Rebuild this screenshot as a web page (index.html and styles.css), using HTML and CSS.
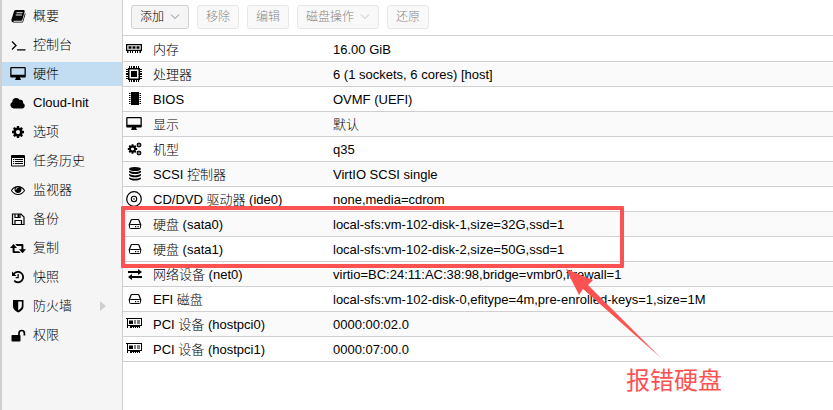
FILE: index.html
```html
<!DOCTYPE html>
<html lang="zh-CN">

<head>
    <meta charset="UTF-8">
    <meta name="viewport" content="width=device-width, initial-scale=1.0">
    <title>硬件</title>
    <link rel="stylesheet" href="styles.css">
</head>

<body>
    <!-- Shared icons -->
    <svg class="sprite" aria-hidden="true">
        <symbol id="desktop" viewBox="0 0 16 16">
            <path fill-rule="evenodd" d="M1.2 1h13.6q1 0 1 1v8.500q0 1-1 1H10q0 1 .8 1.500V14H5.200v-1Q6 12.500 6 11.500H1.200q-1 0-1-1V2q0-1 1-1zM1.500 2.200v6.600h13V2.200z" />
        </symbol>
        <symbol id="cog" viewBox="0 0 1792 1792">
            <path d="M1152 896q0-106-75-181t-181-75-181 75-75 181 75 181 181 75 181-75 75-181zm512-109v222q0 12-8 23t-20 13l-185 28q-19 54-39 91 35 50 107 138 10 12 10 25t-9 23q-27 37-99 108t-94 71q-12 0-26-9l-138-108q-44 23-91 38-16 136-29 186-7 28-36 28h-222q-14 0-24.500-8.500t-11.500-21.500l-28-184q-49-16-90-37l-141 107q-10 9-25 9-14 0-25-11-126-114-165-168-7-10-7-23 0-12 8-23 15-21 51-66.500t54-70.500q-27-50-41-99l-183-27q-13-2-21-12.500t-8-23.500v-222q0-12 8-23t19-13l186-28q14-46 39-92-40-57-107-138-10-12-10-24 0-10 9-23 26-36 98.500-107.500t94.500-71.500q13 0 26 10l138 107q44-23 91-38 16-136 29-186 7-28 36-28h222q14 0 24.500 8.500t11.500 21.500l28 184q49 16 90 37l142-107q9-9 24-9 13 0 25 10 129 119 165 170 7 8 7 22 0 12-8 23-15 21-51 66.500t-54 70.500q26 50 41 98l183 28q13 2 21 12.500t8 23.500z" />
        </symbol>
        <symbol id="hdd" viewBox="0 0 16 16">
            <path d="M3 9.500 5 4.200q.3-.7 1-.7h6q.7 0 1 .7l2 5.300" fill="none" stroke="currentColor" stroke-width="1.200" />
            <rect x="3.500" y="8.500" width="11" height="4" rx="1" fill="none" stroke="currentColor" />
            <path d="M9 10h1.200v1.200H9zM11.500 10h1.200v1.200h-1.200z" />
        </symbol>
        <symbol id="pci" viewBox="0 0 16 16">
            <path fill-rule="evenodd" d="M0 2h16v8H2v2H1V3H0zM2 3v6h13V3z" />
            <path d="M3 4.500h4v3.500H3zM8 4.500h2v1H8zM8 6.500h2v1H8zM11 4.500h3v1h-3zM11 6.500h3v1h-3zM4 10h10v2h-1v-1h-1v1h-1v-1h-1v1H9v-1H8v1H7v-1H6v1H4z" />
        </symbol>
    </svg>

    <nav class="sidebar">
        <a href="#"><svg class="icon" viewBox="0 0 16 16"><path fill-rule="evenodd" d="M5.800 2h8q1.200.2.9 1.400L12.300 12q-.3.800-1.200.8H3.600q-.6.500.3 1h7.700q.8 0 1.100-.9L15 5q.7.500.4 1.400l-2.200 7q-.4 1.200-1.600 1.200H3.500q-2.300-.4-2.200-2.500L4 3.400Q4.500 2 5.800 2zM6.600 4.300l-.3.900h6.200l.3-.9zM5.900 6.500l-.3.900h6.200l.3-.9z" /></svg>概要</a>
        <a href="#"><svg class="icon" viewBox="0 0 16 16"><path d="M2 4.500 6 8.500l-4 4M7 12.800h8.500" fill="none" stroke="currentColor" stroke-width="1.300" /></svg>控制台</a>
        <a href="#" class="active"><svg class="icon"><use href="#desktop" /></svg>硬件</a>
        <a href="#"><svg class="icon" viewBox="0 0 16 16"><path d="M4 13.500a3.500 3.500 0 0 1-1.700-6.600A4 4 0 0 1 9.800 5a2.300 2.300 0 0 1 3.100 3A2.900 2.900 0 0 1 12.700 13.500z" /></svg>Cloud-Init</a>
        <a href="#"><svg class="icon" viewBox="-1 -1 16 16"><use href="#cog" width="14" height="14" /></svg>选项</a>
        <a href="#"><svg class="icon" viewBox="0 0 16 16"><path fill-rule="evenodd" d="M2 2h12q1 0 1 1v9.500q0 1-1 1H2q-1 0-1-1V3q0-1 1-1zM2 5v7.500h12V5z" /><path d="M3 6h1.200v1H3zM5 6h8v1H5zM3 8h1.200v1H3zM5 8h8v1H5zM3 10h1.200v1H3zM5 10h8v1H5z" /></svg>任务历史</a>
        <a href="#"><svg class="icon" viewBox="-128 -128 2048 2048"><path d="M1664 960q-152-236-381-353 61 104 61 225 0 185-131.500 316.500t-316.500 131.500-316.500-131.500-131.500-316.500q0-121 61-225-229 117-381 353 133 205 333.500 326.500t434.500 121.500 434.500-121.500 333.500-326.500zm-720-384q0-20-14-34t-34-14q-125 0-214.500 89.500t-89.500 214.500q0 20 14 34t34 14 34-14 14-34q0-86 61-147t147-61q20 0 34-14t14-34zm848 384q0 34-20 69-140 230-376.500 368.500t-499.500 138.500-499.500-139-376.500-368q-20-35-20-69t20-69q140-229 376.500-368t499.500-139 499.500 139 376.500 368q20 35 20 69z" /></svg>监视器</a>
        <a href="#"><svg class="icon" viewBox="0 0 16 16"><path d="M2.500 3h8.500l3 3v7.500H2.500zM5 13.500V9.500h6.500v4M5 3v3.500h5V3" fill="none" stroke="currentColor" stroke-width="1.200" /><path d="M7.500 3h1.800v3H7.500z" /></svg>备份</a>
        <a href="#"><svg class="icon" viewBox="0 0 16 16"><path d="M3.500 4 7 8H4.600v3.200H9l1.700 1.900H3.600q-1 0-1-1V8H0zM5.300 4h7.100q1 0 1 1v4.200H16L12.500 13.300 9 9.200h2.400V5.900H7z" /></svg>复制</a>
        <a href="#"><svg class="icon" viewBox="0 0 16 16"><path d="M3.800 5A5.200 5.200 0 1 1 4.200 11.700" fill="none" stroke="currentColor" stroke-width="1.800" /><path d="M2 2.500v4.500h4.500zM7.500 5h1.300v4.300H5.700V8h1.800z" /></svg>快照</a>
        <a href="#"><svg class="icon" viewBox="0 0 16 16"><path fill-rule="evenodd" d="M3 2h10.500v6.500q0 3.500-5.200 6Q3 12 3 8.500zM8.200 3.600v9q3.600-2 3.600-4.300V3.600z" /></svg>防火墙<span class="expand"></span></a>
        <a href="#"><svg class="icon" viewBox="0 0 16 16"><rect x="1.500" y="8" width="9" height="6.500" rx=".8" /><path d="M9 8V6.200a2.700 2.700 0 0 1 5.400 0V8.500" fill="none" stroke="currentColor" stroke-width="1.700" /></svg>权限</a>
    </nav>

    <main class="content">
        <div class="toolbar">
            <button type="button">添加<svg class="caret" viewBox="0 0 10 6"><path d="M1 .5l4 4 4-4" /></svg></button>
            <button type="button" disabled>移除</button>
            <button type="button" disabled>编辑</button>
            <button type="button" disabled>磁盘操作<svg class="caret" viewBox="0 0 10 6"><path d="M1 .5l4 4 4-4" /></svg></button>
            <button type="button" disabled>还原</button>
        </div>

        <table class="hardware">
            <tbody>
                <tr>
                    <th scope="row"><span class="label"><svg class="icon" viewBox="0 0 16 16"><path fill-rule="evenodd" d="M0 3h16v7H0zM1.300 4.200v4.600h13.400V4.200z" /><path d="M2.500 5.200h3v2.600h-3zM6.500 5.200h3v2.600h-3zM10.500 5.200h3v2.600h-3zM1 10h1.500v2H1zM4 10h1v2H4zM6 10h1v2H6zM9 10h1v2H9zM11 10h1v2h-1zM13.500 10H15v2h-1.500z" /></svg>内存</span></th>
                    <td>16.00 GiB</td>
                </tr>
                <tr>
                    <th scope="row"><span class="label"><svg class="icon" viewBox="0 0 16 16"><path fill-rule="evenodd" d="M2 2h12v12H2zM3.500 3.500v9h9v-9z" /><path d="M5 5h6v6H5zM3 0h1v2H3zM5 0h1v2H5zM7 0h2v2H7zM10 0h1v2h-1zM12 0h1v2h-1zM3 14h1v2H3zM5 14h1v2H5zM7 14h2v2H7zM10 14h1v2h-1zM12 14h1v2h-1zM0 3h2v1H0zM0 5h2v1H0zM0 7h2v2H0zM0 10h2v1H0zM0 12h2v1H0zM14 3h2v1h-2zM14 5h2v1h-2zM14 7h2v2h-2zM14 10h2v1h-2zM14 12h2v1h-2z" /></svg>处理器</span></th>
                    <td>6 (1 sockets, 6 cores) [host]</td>
                </tr>
                <tr>
                    <th scope="row"><span class="label"><svg class="icon" viewBox="0 0 16 16"><path d="M5 1h8v13H5zM3 2h1.500v1H3zM3 4h1.500v1H3zM3 6h1.500v1H3zM3 8h1.500v1H3zM3 10h1.500v1H3zM3 12h1.500v1H3zM13.500 2H15v1h-1.500zM13.500 4H15v1h-1.500zM13.500 6H15v1h-1.500zM13.500 8H15v1h-1.500zM13.500 10H15v1h-1.500zM13.500 12H15v1h-1.500z" /></svg>BIOS</span></th>
                    <td>OVMF (UEFI)</td>
                </tr>
                <tr>
                    <th scope="row"><span class="label"><svg class="icon"><use href="#desktop" /></svg>显示</span></th>
                    <td>默认</td>
                </tr>
                <tr>
                    <th scope="row"><span class="label"><svg class="icon" viewBox="0 0 16 16"><use href="#cog" x="1" y="2.500" width="11" height="11" /><use href="#cog" x="10" y="1" width="6" height="6" /><use href="#cog" x="10" y="9" width="6" height="6" /></svg>机型</span></th>
                    <td>q35</td>
                </tr>
                <tr>
                    <th scope="row"><span class="label"><svg class="icon" viewBox="0 0 16 16"><ellipse cx="9" cy="3" rx="6" ry="2" /><path d="M3 4.800q6 2.600 12 0V6q-1.500 2-6 2T3 6zM3 8.100q6 2.600 12 0v1.200q-1.500 2-6 2t-6-2zM3 11.400q6 2.600 12 0v1.200q-1.500 2-6 2t-6-2z" /></svg>SCSI 控制器</span></th>
                    <td>VirtIO SCSI single</td>
                </tr>
                <tr>
                    <th scope="row"><span class="label"><svg class="icon" viewBox="0 0 16 16"><circle cx="8" cy="8" r="7.300" fill="none" stroke="currentColor" stroke-width="1.200" /><circle cx="8" cy="8" r="2.700" fill="none" stroke="currentColor" stroke-width="1.100" /><circle cx="8" cy="8" r=".8" /></svg>CD/DVD 驱动器 (ide0)</span></th>
                    <td>none,media=cdrom</td>
                </tr>
                <tr>
                    <th scope="row"><span class="label"><svg class="icon"><use href="#hdd" /></svg>硬盘 (sata0)</span></th>
                    <td>local-sfs:vm-102-disk-1,size=32G,ssd=1</td>
                </tr>
                <tr>
                    <th scope="row"><span class="label"><svg class="icon"><use href="#hdd" /></svg>硬盘 (sata1)</span></th>
                    <td>local-sfs:vm-102-disk-2,size=50G,ssd=1</td>
                </tr>
                <tr>
                    <th scope="row"><span class="label"><svg class="icon" viewBox="0 0 16 16"><path d="M2 5h10V3l4 3-4 3V7H2zM16 10H6V8l-4 3 4 3v-2h10z" /></svg>网络设备 (net0)</span></th>
                    <td>virtio=BC:24:11:AC:38:98,bridge=vmbr0,firewall=1</td>
                </tr>
                <tr>
                    <th scope="row"><span class="label"><svg class="icon"><use href="#hdd" /></svg>EFI 磁盘</span></th>
                    <td>local-sfs:vm-102-disk-0,efitype=4m,pre-enrolled-keys=1,size=1M</td>
                </tr>
                <tr>
                    <th scope="row"><span class="label"><svg class="icon"><use href="#pci" /></svg>PCI 设备 (hostpci0)</span></th>
                    <td>0000:00:02.0</td>
                </tr>
                <tr>
                    <th scope="row"><span class="label"><svg class="icon"><use href="#pci" /></svg>PCI 设备 (hostpci1)</span></th>
                    <td>0000:07:00.0</td>
                </tr>
            </tbody>
        </table>

        <!-- Callout over the two failing disks -->
        <div class="callout-box"></div>
        <svg class="callout-arrow" viewBox="0 0 96 90"><path d="M0 0l27 11-5 5 73 73L17 20l-4 6z" /></svg>
        <div class="callout-text">报错硬盘</div>
    </main>
</body>

</html>
```

FILE: styles.css
```css
html, body {
    height: 100%;
    margin: 0;
    padding: 0;
}

body {
    display: flex;
    background: #fff;
    color: #000;
    font-family: "Liberation Sans", "Noto Sans CJK SC", sans-serif;
    font-size: 13px;
    font-weight: 300;
    line-height: 24px;
}

.sprite {
    position: absolute;
    width: 0;
    height: 0;
}

.icon {
    flex: none;
    width: 16px;
    height: 16px;
    fill: currentColor;
}

/* Sidebar */
.sidebar {
    box-sizing: border-box;
    flex: none;
    display: flex;
    flex-direction: column;
    gap: 5px;
    width: 123px;
    padding-top: 4px;
    background: #f5f5f5;
    border-left: 2px solid #cfcfcf;
    border-right: 1px solid #cfcfcf;
}

.sidebar a {
    display: flex;
    align-items: center;
    gap: 7px;
    height: 24px;
    padding: 0 16px 0 8px;
    color: #000;
    text-decoration: none;
}

.sidebar .active {
    background: #c2ddf2;
}

.expand {
    margin-left: auto;
    border: 5px solid transparent;
    border-left: 6px solid #cfcfcf;
    border-right: 0;
}

/* Toolbar */
.content {
    position: relative;
    flex: 1;
    min-width: 0;
}

.toolbar {
    display: flex;
    gap: 8px;
    padding: 5px 8px 6px;
    border-bottom: 1px solid #cfcfcf;
}

.toolbar button {
    display: flex;
    align-items: center;
    gap: 6px;
    height: 24px;
    padding: 0 8px;
    background: #f5f5f5;
    border: 1px solid #d0d0d0;
    border-radius: 3px;
    color: #000;
    font: inherit;
    font-size: 12px;
}

.toolbar button:disabled {
    opacity: 0.5;
}

.caret {
    width: 10px;
    height: 6px;
    fill: none;
    stroke: #888;
}

/* Hardware list */
.hardware {
    width: 100%;
    margin-top: 1px;
    border-collapse: separate;
    border-spacing: 0;
}

.hardware th,
.hardware td {
    padding: 2px 0 0;
    border-bottom: 1px solid #cfcfcf;
    font-weight: inherit;
    line-height: 22px;
    text-align: left;
    white-space: nowrap;
}

.hardware th {
    width: 210px;
}

.hardware tr:nth-child(even) {
    background: #fafafa;
}

.hardware .icon {
    margin-top: -2px;
}

.label {
    display: flex;
    align-items: center;
    gap: 11px;
    padding-left: 3px;
}

/* Callout */
.callout-box {
    position: absolute;
    top: 206px;
    left: -2px;
    box-sizing: border-box;
    width: 503px;
    height: 62px;
    border: 4px solid #fc5252;
    border-radius: 1px;
}

.callout-arrow {
    position: absolute;
    top: 269px;
    left: 443px;
    width: 96px;
    height: 90px;
    fill: #fc5252;
}

.callout-text {
    position: absolute;
    top: 366px;
    left: 503px;
    color: #fc5252;
    font-size: 24px;
    font-weight: 400;
    line-height: 30px;
}
```
